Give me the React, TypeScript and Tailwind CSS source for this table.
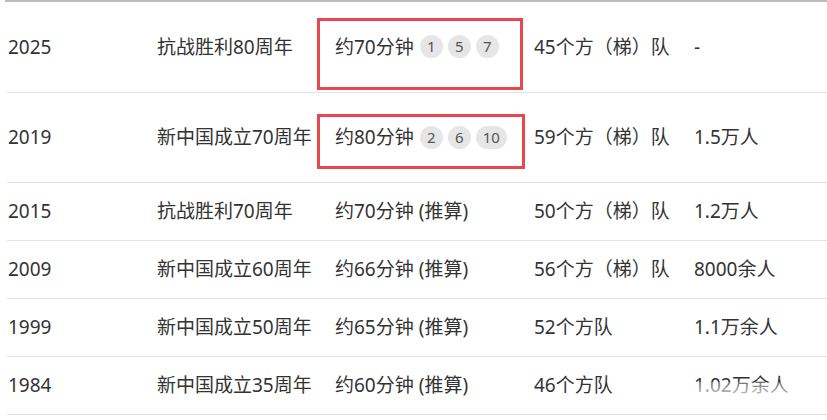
import React from 'react';

type Row = {
  year: string;
  event: string;
  duration: string;
  badges?: string[];
  teams: string;
  people: string;
  tall?: boolean;
};

const rows: Row[] = [
  { year: '2025', event: '抗战胜利80周年', duration: '约70分钟', badges: ['1', '5', '7'], teams: '45个方（梯）队', people: '-', tall: true },
  { year: '2019', event: '新中国成立70周年', duration: '约80分钟', badges: ['2', '6', '10'], teams: '59个方（梯）队', people: '1.5万人', tall: true },
  { year: '2015', event: '抗战胜利70周年', duration: '约70分钟 (推算)', teams: '50个方（梯）队', people: '1.2万人' },
  { year: '2009', event: '新中国成立60周年', duration: '约66分钟 (推算)', teams: '56个方（梯）队', people: '8000余人' },
  { year: '1999', event: '新中国成立50周年', duration: '约65分钟 (推算)', teams: '52个方队', people: '1.1万余人' },
  { year: '1984', event: '新中国成立35周年', duration: '约60分钟 (推算)', teams: '46个方队', people: '1.02万余人' },
];

const Badge = ({ n }: { n: string }) => (
  <span className="inline-flex h-[23px] min-w-[23px] items-center justify-center rounded-full bg-[#e6e6e6] px-[7px] text-[15px] leading-none text-[#555]">
    {n}
  </span>
);

export default function App() {
  return (
    <div
      className="relative h-[420px] w-[827px] overflow-hidden bg-white text-[19px] text-[#333]"
      style={{ fontFamily: '"Noto Sans", "Noto Sans CJK SC", sans-serif' }}
    >
      <div className="ml-[5px] border-t-2 border-[#bdbdbd]">
        {rows.map((r) => (
          <div
            key={r.year}
            className={`ml-[2px] grid grid-cols-[149px_178px_199px_160px_1fr] items-center border-b border-[#e2e2e2] ${
              r.tall ? 'h-[90.5px]' : 'h-[58px]'
            }`}
          >
            <div className="pl-[1px]">{r.year}</div>
            <div className="pl-[1px] whitespace-nowrap">{r.event}</div>
            <div className="flex items-center gap-[6px] pl-[1px] whitespace-nowrap">
              <span>{r.duration}</span>
              {r.badges && (
                <span className="flex gap-[5px]">
                  {r.badges.map((b) => (
                    <Badge key={b} n={b} />
                  ))}
                </span>
              )}
            </div>
            <div className="pl-[1px] whitespace-nowrap">{r.teams}</div>
            <div className="pl-[1px] whitespace-nowrap">{r.people}</div>
          </div>
        ))}
      </div>

      {/* red annotation boxes */}
      <div className="absolute left-[317px] top-[18px] h-[72px] w-[206px] border-[3px] border-[#e8474b]" />
      <div className="absolute left-[317px] top-[114px] h-[55px] w-[208px] border-[3px] border-[#e8474b]" />

      {/* watermark fade */}
      <div className="absolute right-0 top-[382px] h-[32px] w-[130px] bg-gradient-to-b from-white/30 via-white/80 to-white" />
    </div>
  );
}
